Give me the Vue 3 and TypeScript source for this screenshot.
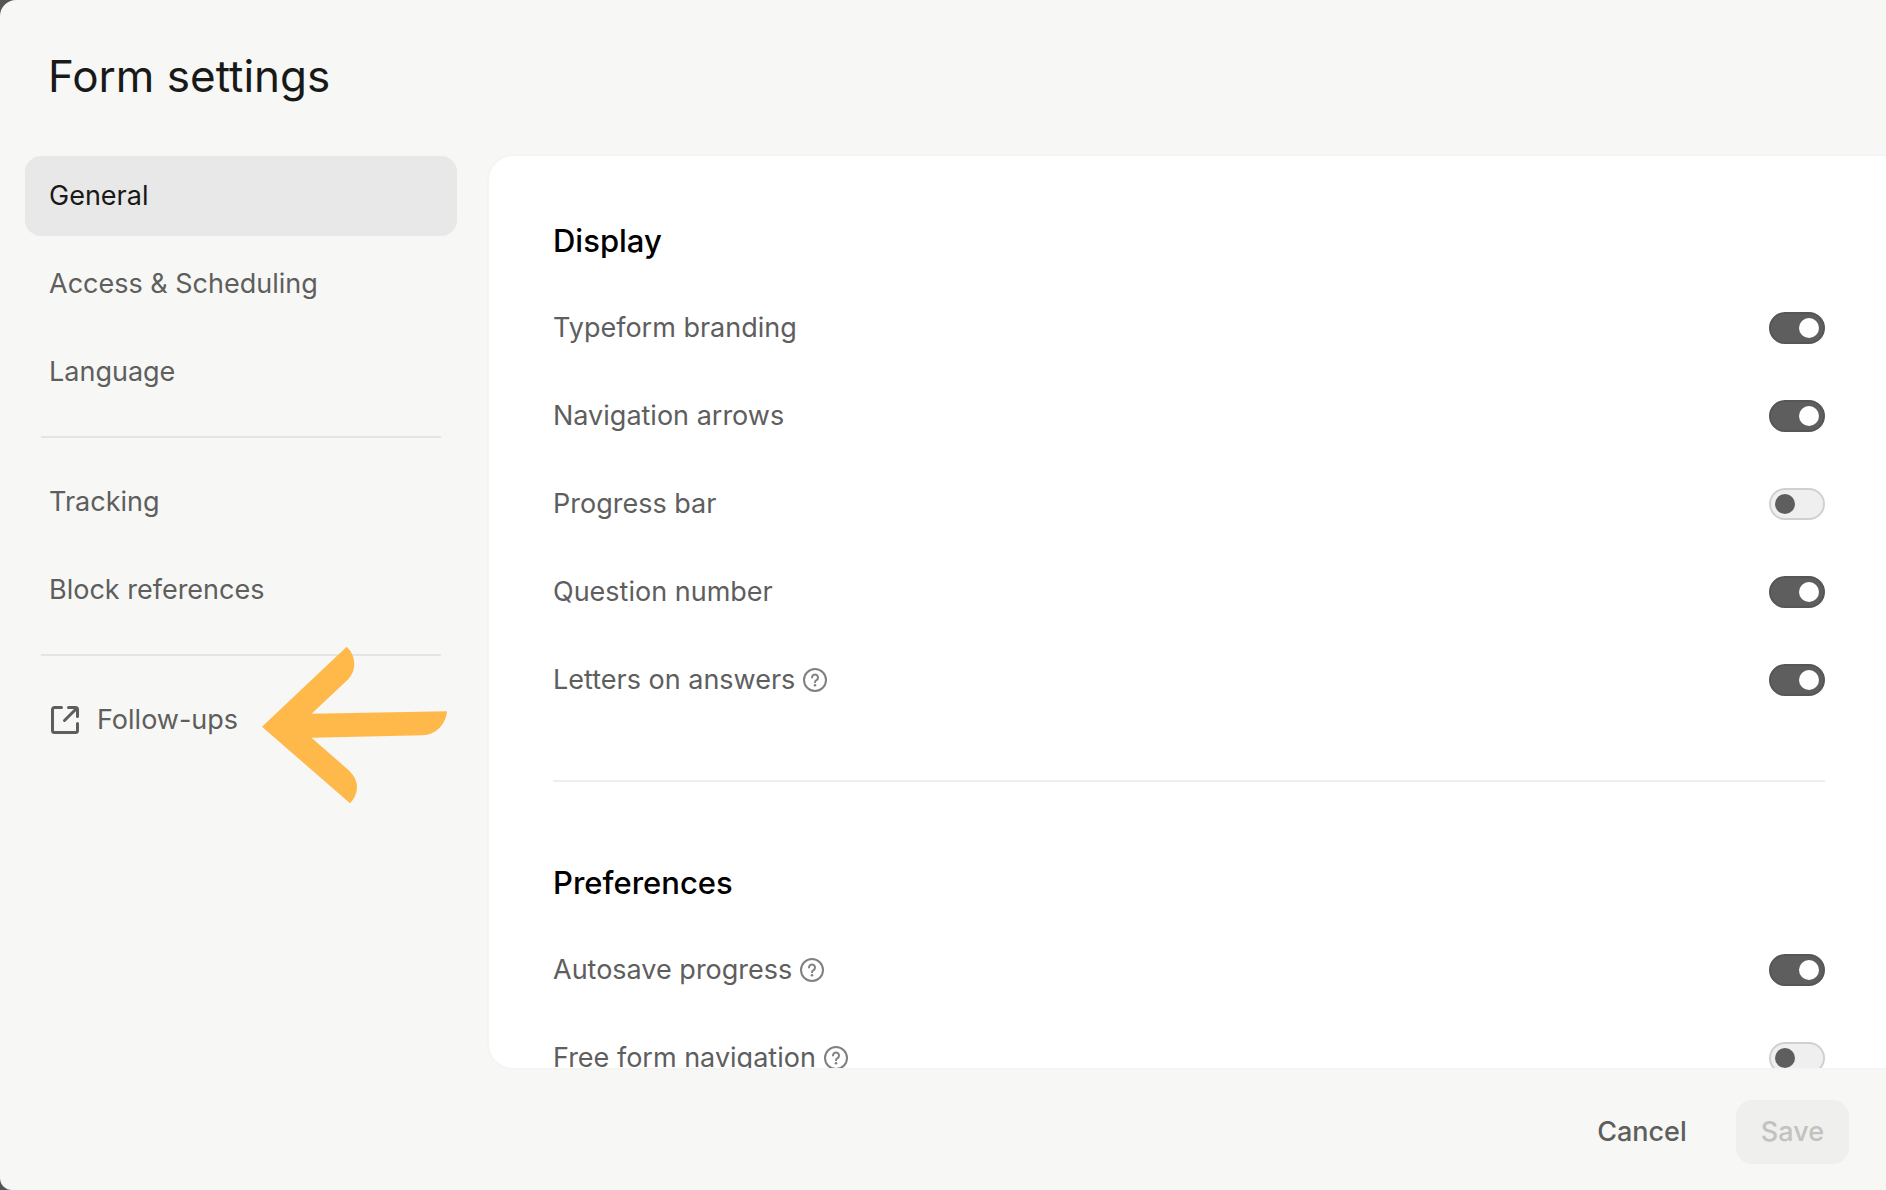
<script setup lang="ts">
import { reactive, ref } from 'vue'

interface Setting {
  id: string
  label: string
  on: boolean
  help?: boolean
}

interface Section {
  title: string
  settings: Setting[]
}

const navGroups: string[][] = [
  ['General', 'Access & Scheduling', 'Language'],
  ['Tracking', 'Block references'],
]

const active = ref('General')

const sections = reactive<Section[]>([
  {
    title: 'Display',
    settings: [
      { id: 'branding', label: 'Typeform branding', on: true },
      { id: 'arrows', label: 'Navigation arrows', on: true },
      { id: 'progress', label: 'Progress bar', on: false },
      { id: 'number', label: 'Question number', on: true },
      { id: 'letters', label: 'Letters on answers', on: true, help: true },
    ],
  },
  {
    title: 'Preferences',
    settings: [
      { id: 'autosave', label: 'Autosave progress', on: true, help: true },
      { id: 'freeform', label: 'Free form navigation', on: false, help: true },
    ],
  },
])
</script>

<template>
  <div class="dialog">
    <header class="header">
      <h1>Form settings</h1>
    </header>

    <main class="body">
      <nav class="nav">
        <div v-for="(group, i) in navGroups" :key="i" class="nav-group">
          <button
            v-for="name in group"
            :key="name"
            type="button"
            class="nav-item"
            :class="{ active: active === name }"
            @click="active = name"
          >
            {{ name }}
          </button>
        </div>
        <div class="nav-group">
          <div class="pointed">
            <a href="#follow-ups" class="nav-item">
              <svg class="external" viewBox="0 0 32 32" aria-hidden="true">
                <path d="M12.5 3.5H5.5a2 2 0 0 0-2 2v21a2 2 0 0 0 2 2h21a2 2 0 0 0 2-2v-7" />
                <path d="M19.5 3.5h7a2 2 0 0 1 2 2v7M27.5 4.500L15.500 16.500" />
              </svg>
              Follow-ups
            </a>
            <svg class="arrow" viewBox="0 0 186 158" aria-hidden="true">
              <path
                d="M0 80.700L84.700 .7Q92.300 8 92.300 18Q92.300 27 86 33.500L49.500 67.700L185 65.300C184 78 174 89 160.700 89.300L49.500 91.700L87 124.500Q95 132 95 141Q95 150 88 157.300Z"
              />
            </svg>
          </div>
        </div>
      </nav>

      <div class="panel">
        <section v-for="section in sections" :key="section.title" class="section">
          <h2>{{ section.title }}</h2>
          <div class="rows">
            <div v-for="s in section.settings" :key="s.id" class="row">
              <label :for="s.id">{{ s.label }}</label>
              <svg v-if="s.help" class="help" viewBox="0 0 24 24" aria-hidden="true">
                <circle cx="12" cy="12" r="11" />
                <path d="M9 9.500A3 3 0 1 1 13.500 12.100Q12 12.900 12 14.300" />
                <circle class="dot" cx="12" cy="17.300" r="1.300" />
              </svg>
              <input :id="s.id" v-model="s.on" type="checkbox" class="toggle" />
            </div>
          </div>
        </section>
      </div>
    </main>

    <footer class="footer">
      <button type="button" class="btn">Cancel</button>
      <button type="button" class="btn save" disabled>Save</button>
    </footer>
  </div>
</template>

<style>
body {
  margin: 0;
  background: #555;
}
</style>

<style scoped>
.dialog {
  box-sizing: border-box;
  display: flex;
  flex-direction: column;
  height: 100vh;
  background: #f7f7f5;
  border-radius: 16px 0 0 12px;
  color: #5e5e5e;
  font-family: Inter, "Liberation Sans", sans-serif;
  font-size: 27px;
  line-height: 40px;
}

.header {
  padding: 48px 48px 52px;
}

h1 {
  margin: 0;
  color: #191919;
  font-size: 44px;
  font-weight: 400;
  line-height: 56px;
}

.body {
  display: flex;
  flex: 1;
  gap: 32px;
  min-height: 0;
  padding-left: 25px;
}

.nav {
  flex: none;
  width: 432px;
}

.nav-group {
  display: flex;
  flex-direction: column;
  gap: 8px;
}

.nav-group + .nav-group::before {
  content: "";
  height: 2px;
  margin: 24px 16px 16px;
  background: #e5e5e3;
}

.nav-item {
  box-sizing: border-box;
  display: flex;
  align-items: center;
  gap: 16px;
  width: 100%;
  height: 80px;
  padding: 0 24px;
  border: 0;
  border-radius: 16px;
  background: none;
  color: inherit;
  font: inherit;
  text-align: left;
  text-decoration: none;
  cursor: pointer;
}

.nav-item.active {
  background: #e8e8e8;
  color: #191919;
}

.external {
  width: 32px;
  height: 32px;
  fill: none;
  stroke: #5e5e5e;
  stroke-width: 3;
  stroke-linecap: round;
  stroke-linejoin: round;
}

.pointed {
  position: relative;
}

.arrow {
  position: absolute;
  top: -34px;
  left: 237px;
  width: 186px;
  height: 158px;
  fill: #ffb94a;
  pointer-events: none;
}

.panel {
  box-sizing: border-box;
  flex: 1;
  min-width: 0;
  overflow: hidden;
  padding: 64px 61px 0 64px;
  border-radius: 24px 0 0 24px;
  background: #fff;
  box-shadow: 0 0 0 2px #f4f4f2;
}

.section + .section {
  margin-top: 76px;
  padding-top: 80px;
  border-top: 2px solid #eee;
}

h2 {
  margin: 0 0 42px;
  color: #000;
  font-size: 31px;
  font-weight: 500;
  line-height: 42px;
}

.rows {
  display: flex;
  flex-direction: column;
  gap: 40px;
}

.row {
  display: flex;
  align-items: center;
  gap: 8px;
  height: 48px;
}

.help {
  width: 24px;
  height: 24px;
  fill: none;
  stroke: #808080;
  stroke-width: 2;
  stroke-linecap: round;
}

.help .dot {
  fill: #808080;
  stroke: none;
}

.toggle {
  box-sizing: border-box;
  appearance: none;
  flex: none;
  display: flex;
  width: 56px;
  height: 32px;
  margin: 0 0 0 auto;
  padding: 4px;
  border: 2px solid #d0d0d0;
  border-radius: 16px;
  background: #efefef;
  cursor: pointer;
}

.toggle::before {
  content: "";
  width: 20px;
  height: 20px;
  border-radius: 50%;
  background: #5e5e5e;
}

.toggle:checked {
  justify-content: flex-end;
  border-color: #565656;
  background: #5e5e5e;
}

.toggle:checked::before {
  background: #fff;
}

.footer {
  display: flex;
  justify-content: flex-end;
  gap: 24px;
  padding: 32px 37px 26px;
}

.btn {
  height: 64px;
  padding: 0 25px;
  border: 0;
  border-radius: 16px;
  background: none;
  color: #5e5e5e;
  font: inherit;
  font-weight: 500;
  cursor: pointer;
}

.save {
  background: #efefee;
  color: #c2c2c1;
  cursor: default;
}
</style>
